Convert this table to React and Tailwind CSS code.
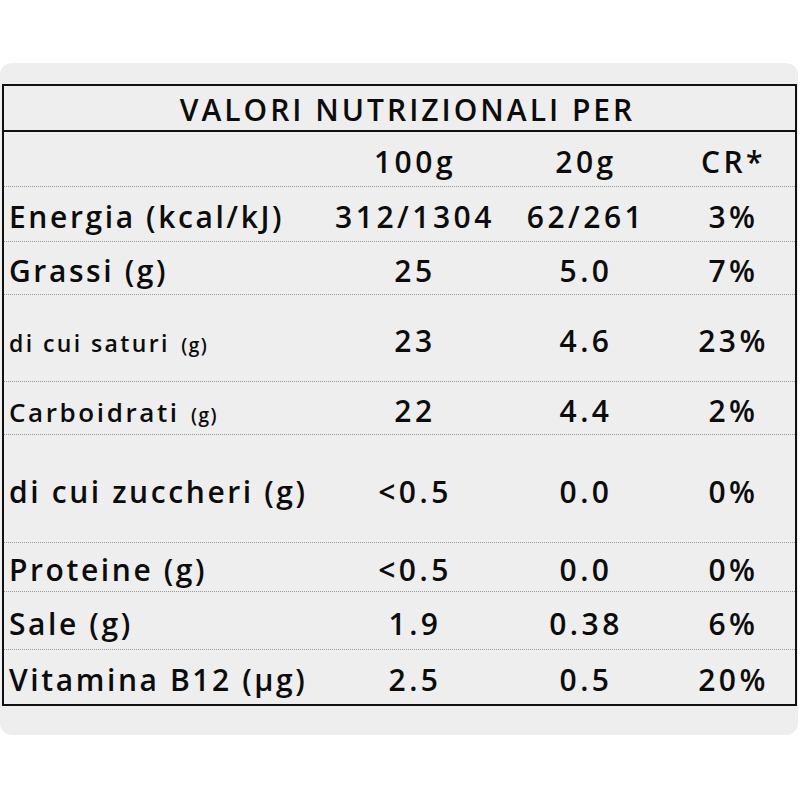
const rows = [
  { label: "Energia (kcal/kJ)", a: "312/1304", b: "62/261", c: "3%", h: "h-[55px]" },
  { label: "Grassi (g)", a: "25", b: "5.0", c: "7%", h: "h-[53px]" },
  { label: "di cui saturi", unit: "(g)", small: true, a: "23", b: "4.6", c: "23%", h: "h-[87px]" },
  { label: "Carboidrati", unit: "(g)", a: "22", b: "4.4", c: "2%", h: "h-[53px]" },
  { label: "di cui zuccheri (g)", a: "<0.5", b: "0.0", c: "0%", h: "h-[108px]" },
  { label: "Proteine (g)", a: "<0.5", b: "0.0", c: "0%", h: "h-[49px]" },
  { label: "Sale (g)", a: "1.9", b: "0.38", c: "6%", h: "h-[58px]" },
  { label: "Vitamina B12 (µg)", a: "2.5", b: "0.5", c: "20%", h: "h-[54px]", last: true },
];

function Row({ row }) {
  return (
    <div
      className={`grid grid-cols-[326px_170px_172px_1fr] items-center pt-[6px] ${row.h} ${
        row.last ? "" : "border-b border-dotted border-[#9a9a9a]"
      }`}
    >
      <div className="pl-[5px] whitespace-nowrap">
        {row.unit ? (
          <>
            <span className={row.small ? "text-[23px] tracking-[2.4px]" : "text-[26px] tracking-[2.6px]"}>
              {row.label}
            </span>{" "}
            <span className="text-[19px] tracking-[1.5px]">{row.unit}</span>
          </>
        ) : (
          <span className="tracking-[2.6px]">{row.label}</span>
        )}
      </div>
      <div className="text-center">{row.a}</div>
      <div className="text-center">{row.b}</div>
      <div className="text-center">{row.c}</div>
    </div>
  );
}

export default function App() {
  return (
    <div className="w-[800px] h-[800px] bg-white pt-[63px] text-[#0c0c0c] font-['Open_Sans',sans-serif]">
      <div className="w-[798px] rounded-[12px] bg-[#eeeeee] pt-[21px] pb-[29px] pl-[2px]">
        <div className="w-[795px] border-2 border-[#111] text-[30px] font-semibold leading-none tracking-[3.5px]">
          <div className="h-[46px] flex items-center justify-center pt-[3px] pl-[16px] border-b-2 border-[#111] tracking-[3px]">
            VALORI NUTRIZIONALI PER
          </div>
          <div className="grid grid-cols-[326px_170px_172px_1fr] items-center pt-[6px] h-[55px] border-b border-dotted border-[#9a9a9a]">
            <div />
            <div className="text-center">100g</div>
            <div className="text-center">20g</div>
            <div className="text-center">CR*</div>
          </div>
          {rows.map((row) => (
            <Row key={row.label} row={row} />
          ))}
        </div>
      </div>
    </div>
  );
}
